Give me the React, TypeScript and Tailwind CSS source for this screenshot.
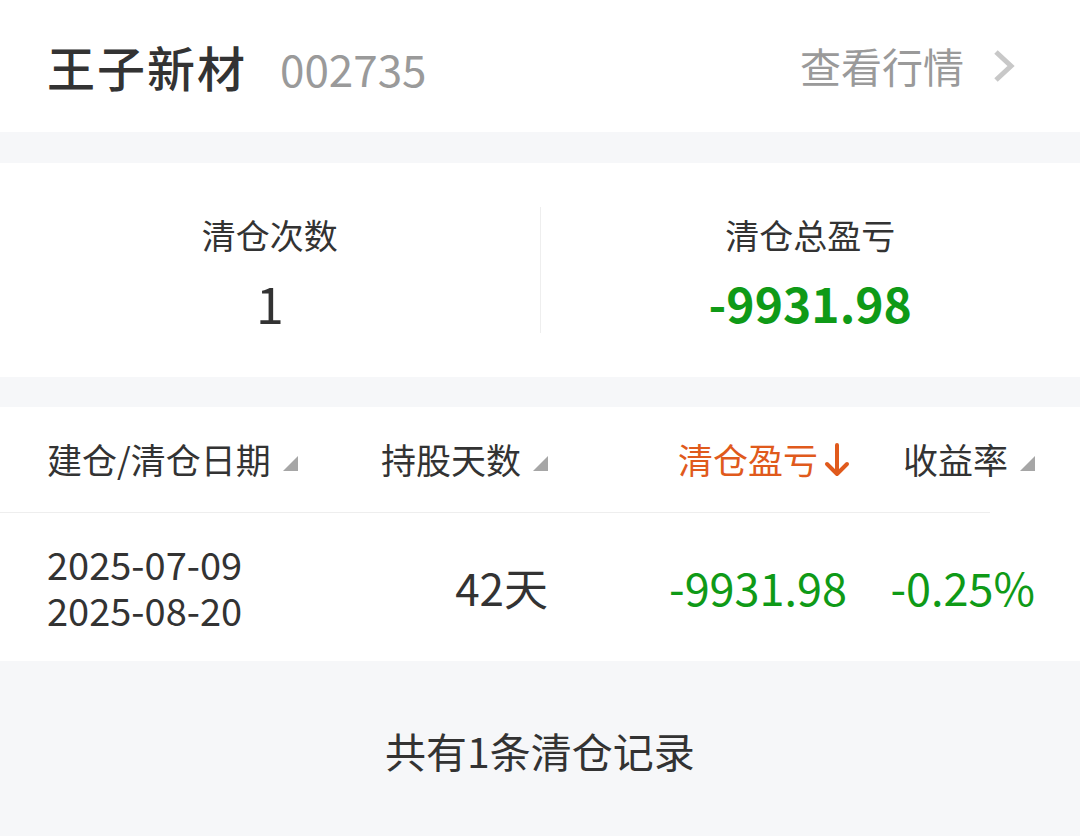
const font = { fontFamily: '"Noto Sans CJK SC", "Noto Sans", sans-serif' };

function SortMark() {
  return (
    <svg width="15" height="15" viewBox="0 0 15 15" className="ml-[12px] mt-[8px]">
      <polygon points="15,0 15,15 0,15" fill="#a6a6a6" />
    </svg>
  );
}

function DownArrow() {
  return (
    <svg width="26" height="34" viewBox="0 0 26 34" className="ml-[6px]">
      <path d="M13 2 V31 M3 21 L13 31 L23 21" stroke="#e05a1c" strokeWidth="4" fill="none" strokeLinecap="round" strokeLinejoin="round" />
    </svg>
  );
}

export default function App() {
  const green = "text-[#0f9a17]";
  return (
    <div className="flex h-[836px] w-[1080px] flex-col bg-[#f6f7f9] text-[#333]" style={font}>
      <header className="flex h-[132px] items-center justify-between bg-white pl-[47px] pr-[64px]">
        <div className="flex items-baseline">
          <span className="text-[48px] font-medium tracking-[2px]">王子新材</span>
          <span className="ml-[33px] text-[44px] text-[#9a9a9a]">002735</span>
        </div>
        <div className="flex items-center">
          <span className="text-[41px] text-[#9a9a9a]">查看行情</span>
          <svg width="24" height="34" viewBox="0 0 24 34" className="ml-[28px]">
            <path d="M4 3 L19 17 L4 31" stroke="#c8c8c8" strokeWidth="5" fill="none" />
          </svg>
        </div>
      </header>

      <section className="mt-[31px] flex h-[214px] items-center bg-white">
        <div className="flex flex-1 flex-col items-center">
          <span className="text-[34px] leading-[46px]">清仓次数</span>
          <span className="mt-[18px] text-[50px] leading-[52px]">1</span>
        </div>
        <div className="h-[126px] w-px bg-[#eeeeee]" />
        <div className="flex flex-1 flex-col items-center">
          <span className="text-[34px] leading-[46px]">清仓总盈亏</span>
          <span className={`mt-[18px] text-[48px] font-bold leading-[52px] ${green}`}>-9931.98</span>
        </div>
      </section>

      <section className="mt-[30px] bg-white">
        <div className="flex h-[105px] items-center pl-[47px] text-[35px]">
          <div className="flex w-[253px] items-center">
            <span>建仓/清仓日期</span>
            <SortMark />
          </div>
          <div className="flex w-[248px] items-center justify-end">
            <span>持股天数</span>
            <SortMark />
          </div>
          <div className="flex w-[302px] items-center justify-end text-[#e05a1c]">
            <span>清仓盈亏</span>
            <DownArrow />
          </div>
          <div className="flex w-[185px] items-center justify-end">
            <span>收益率</span>
            <SortMark />
          </div>
        </div>
        <div className="h-px w-[990px] bg-[#eeeeee]" />
        <div className="flex h-[148px] items-center pl-[47px]">
          <div className="flex w-[253px] flex-col gap-[6px] text-[38px] leading-[40px]">
            <span>2025-07-09</span>
            <span>2025-08-20</span>
          </div>
          <div className="flex w-[248px] justify-end text-[44px]">42天</div>
          <div className={`flex w-[299px] justify-end text-[45px] ${green}`}>-9931.98</div>
          <div className={`flex w-[188px] justify-end text-[45px] ${green}`}>-0.25%</div>
        </div>
      </section>

      <footer className="flex flex-1 items-center justify-center pt-[4px]">
        <span className="text-[41px]">共有1条清仓记录</span>
      </footer>
    </div>
  );
}
